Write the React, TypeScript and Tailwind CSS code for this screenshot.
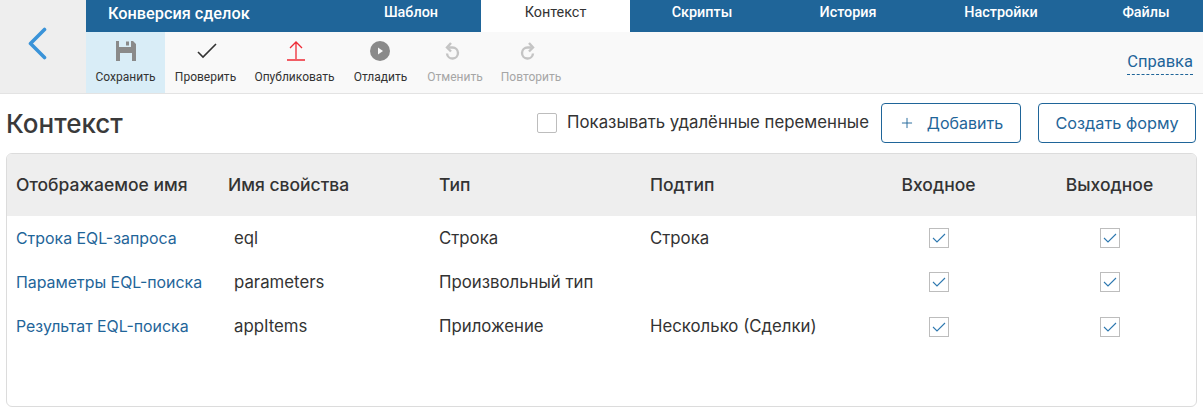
import { Plus } from 'lucide-react';

const tabs = [
  { label: 'Шаблон', width: 'w-[140px]' },
  { label: 'Контекст', width: 'w-[149px]', active: true },
  { label: 'Скрипты', width: 'w-[144px]' },
  { label: 'История', width: 'w-[148px]' },
  { label: 'Настройки', width: 'w-[158px]' },
  { label: 'Файлы', width: 'w-[123px] pl-[9px]' },
];

const rows = [
  { name: 'Строка EQL-запроса', prop: 'eql', type: 'Строка', subtype: 'Строка', height: 'h-[44px]', linkPad: 'pt-[2px]' },
  { name: 'Параметры EQL-поиска', prop: 'parameters', type: 'Произвольный тип', subtype: '', height: 'h-[44px]', linkPad: 'pt-[2px]' },
  { name: 'Результат EQL-поиска', prop: 'appItems', type: 'Приложение', subtype: 'Несколько (Сделки)', height: 'h-[45px]', linkPad: 'pt-[1px]' },
];

function SaveIcon() {
  return (
    <svg width="20" height="20" viewBox="0 0 20 20" fill="#8a8a8a">
      <path d="M0 0h3v6h12V0h2l3 3v17H0z" />
      <rect x="10" y="0.5" width="3" height="4" />
      <rect x="4" y="12" width="12" height="8" fill="#d9edf7" />
    </svg>
  );
}

function CheckIcon() {
  return (
    <svg width="20" height="16" viewBox="0 0 20 16" fill="none" stroke="#333" strokeWidth="1.6">
      <path d="M1 9l5 5L19 1" />
    </svg>
  );
}

function PublishIcon() {
  return (
    <svg width="18" height="20" viewBox="0 0 18 20" fill="none" stroke="#ee2a35" strokeWidth="1.3">
      <path d="M9 18V1M3 7l6-6 6 6M0 19h18" />
    </svg>
  );
}

function PlayIcon() {
  return (
    <svg width="20" height="20" viewBox="0 0 20 20">
      <circle cx="10" cy="10" r="10" fill="#8a8a8a" />
      <path d="M8 6.5l5 3.5-5 3.5z" fill="#f9f9f9" />
    </svg>
  );
}

function UndoIcon({ flip }: { flip?: boolean }) {
  return (
    <svg width="16" height="18" viewBox="0 0 16 18" fill="none" stroke="#c4c4c4" strokeWidth="2.4" className={flip ? '-scale-x-100' : ''}>
      <path d="M4.5 5.5h4a5.5 5.5 0 1 1-5.5 6" />
      <path d="M7 1L3 5.5 7 9.5" />
    </svg>
  );
}

const tools = [
  { label: 'Сохранить', icon: <SaveIcon />, width: 'w-[79px]', active: true, iconPad: '' },
  { label: 'Проверить', icon: <CheckIcon />, width: 'w-[81px]', iconPad: 'pl-[3px]' },
  { label: 'Опубликовать', icon: <PublishIcon />, width: 'w-[97px]', iconPad: 'pl-[2px]' },
  { label: 'Отладить', icon: <PlayIcon />, width: 'w-[75px]', iconPad: 'pr-[1px]' },
  { label: 'Отменить', icon: <UndoIcon />, width: 'w-[74px]', disabled: true, iconPad: 'pr-[6px]' },
  { label: 'Повторить', icon: <UndoIcon flip />, width: 'w-[78px]', disabled: true, iconPad: 'pr-[6px]' },
];

function TableCheck() {
  return (
    <div className="w-[20px] h-[20px] border border-[#bdbdbd] flex items-center justify-center bg-white">
      <svg width="14" height="10" viewBox="0 0 14 10" fill="none" stroke="#2f79b0" strokeWidth="1.1">
        <path d="M1 5l4 4 8-8" />
      </svg>
    </div>
  );
}

export default function App() {
  return (
    <div className="w-[1203px] h-[412px] overflow-hidden bg-white font-['Inter',sans-serif] text-[#333]">
      <div className="flex h-[94px] border-b border-[#e3e3e3]">
        <div className="w-[86px] bg-[#eeeeee] flex items-center pl-[28px] pb-[6px]">
          <svg width="19" height="33" viewBox="0 0 19 33" fill="none" stroke="#3a93d8" strokeWidth="3.6" strokeLinecap="round" strokeLinejoin="round">
            <path d="M16.5 2.5L2.5 16.5 16.5 30.5" />
          </svg>
        </div>
        <div className="flex-1 flex flex-col font-['Roboto',sans-serif]">
          <div className="h-[32px] bg-[#1f6599] flex text-white text-[14.4px] font-medium">
            <div className="w-[255px] pl-[22px] text-[16.3px] leading-[27px]">Конверсия сделок</div>
            {tabs.map((tab) => (
              <div
                key={tab.label}
                className={`${tab.width} text-center leading-[25px] ${tab.active ? 'bg-white text-[#333] font-normal' : ''}`}
              >
                {tab.label}
              </div>
            ))}
          </div>
          <div className="flex-1 bg-[#f9f9f9] flex">
            {tools.map((tool) => (
              <div
                key={tool.label}
                className={`${tool.width} flex flex-col items-center ${tool.active ? 'bg-[#d9edf7]' : ''}`}
              >
                <div className={`h-[20px] mt-[9px] flex items-center ${tool.iconPad}`}>{tool.icon}</div>
                <div className={`mt-[9px] text-[12px] leading-[14px] ${tool.disabled ? 'text-[#a6a6a6]' : 'text-[#333]'}`}>
                  {tool.label}
                </div>
              </div>
            ))}
            <div className="ml-auto mr-[10px] mt-[19px] h-[24px] text-[16.5px] leading-[22px] text-[#1f6599] border-b border-dashed border-[#1f6599]">
              Справка
            </div>
          </div>
        </div>
      </div>

      <div className="flex items-center h-[59px] pl-[6px] pr-[7px] pb-[1px]">
        <h1 className="text-[26px] font-medium text-[#3a3a3a]">Контекст</h1>
        <div className="ml-auto w-[20px] h-[20px] border border-[#bdbdbd] rounded-[2px]" />
        <span className="ml-[10px] text-[16.8px]">Показывать удалённые переменные</span>
        <div className="ml-[12px] w-[140px] h-[40px] border border-[#1f6599] rounded-[4px] flex items-center justify-center gap-[12px] text-[16px] text-[#1f6599]">
          <Plus className="w-[16px] h-[16px]" strokeWidth={1.4} />
          <span>Добавить</span>
        </div>
        <div className="ml-[17px] w-[158px] h-[40px] border border-[#1f6599] rounded-[4px] flex items-center justify-center text-[16.3px] text-[#1f6599]">
          Создать форму
        </div>
      </div>

      <div className="mx-[6px] h-[254px] border border-[#dcdcdc] rounded-[6px] overflow-hidden text-[16.8px]">
        <div className="grid grid-cols-[212px_211px_211px_210px_157px_1fr] h-[62px] items-center bg-[#eeeeee] font-medium pl-[9px] text-[17.5px]">
          <div>Отображаемое имя</div>
          <div>Имя свойства</div>
          <div>Тип</div>
          <div>Подтип</div>
          <div className="text-center">Входное</div>
          <div className="text-center pl-[6px]">Выходное</div>
        </div>
        {rows.map((row) => (
          <div key={row.name} className={`grid grid-cols-[212px_211px_211px_210px_157px_1fr] ${row.height} items-center pl-[9px]`}>
            <div className={`text-[#1f6599] text-[15.9px] ${row.linkPad}`}>{row.name}</div>
            <div className="pl-[6px] pt-[1px]">{row.prop}</div>
            <div className="pt-[1px]">{row.type}</div>
            <div className="pt-[1px]">{row.subtype}</div>
            <div className="flex justify-center"><TableCheck /></div>
            <div className="flex justify-center pl-[6px]"><TableCheck /></div>
          </div>
        ))}
      </div>
    </div>
  );
}
